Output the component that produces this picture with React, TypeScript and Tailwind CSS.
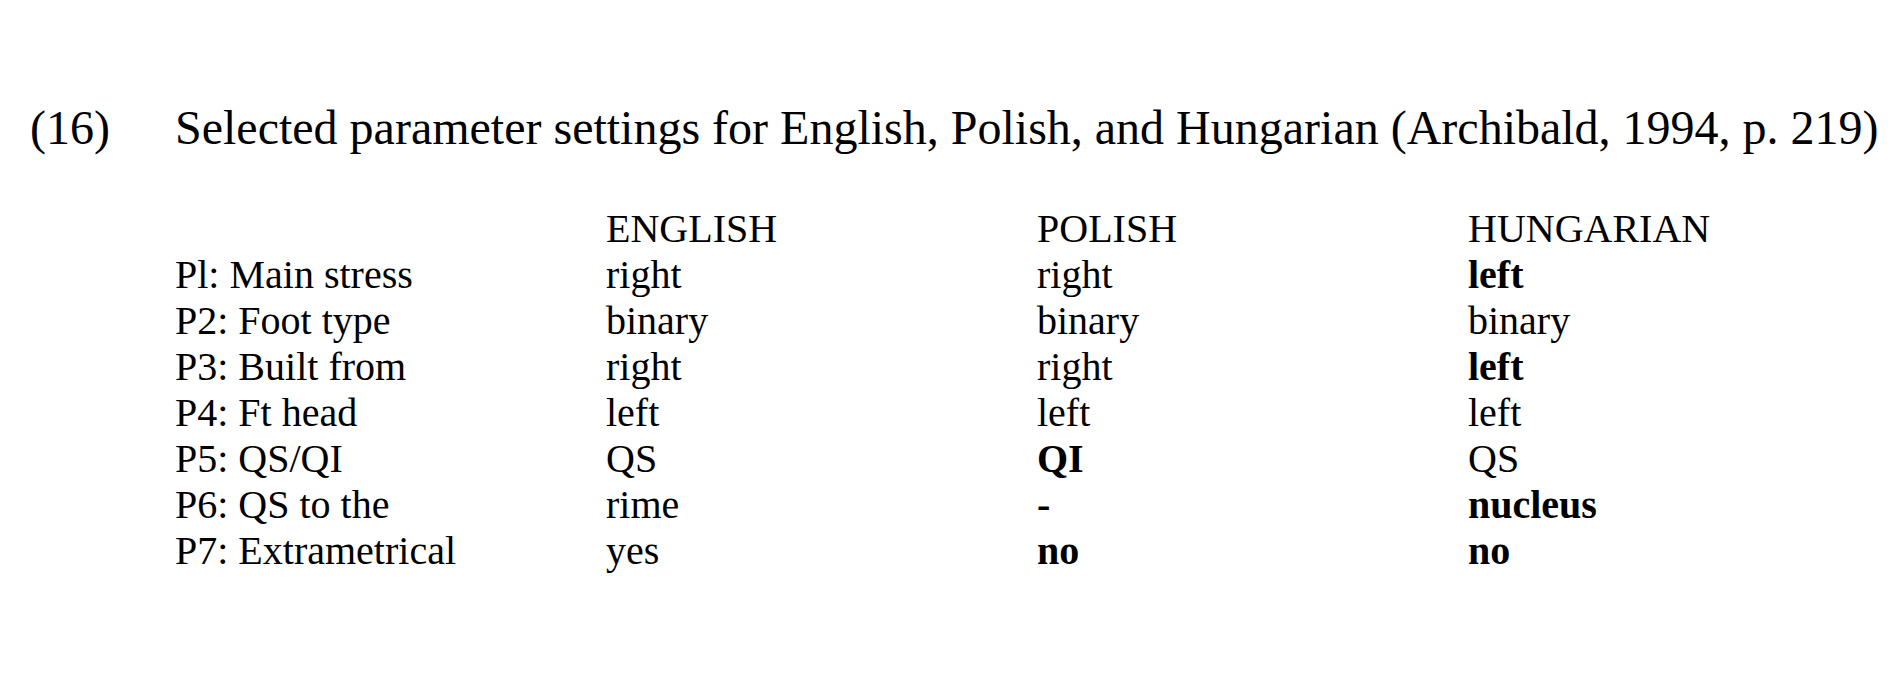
const rows: [string, string, string, string][] = [
  ["Pl: Main stress", "right", "right", "*left"],
  ["P2: Foot type", "binary", "binary", "binary"],
  ["P3: Built from", "right", "right", "*left"],
  ["P4: Ft head", "left", "left", "left"],
  ["P5: QS/QI", "QS", "*QI", "QS"],
  ["P6: QS to the", "rime", "*-", "*nucleus"],
  ["P7: Extrametrical", "yes", "*no", "*no"],
];

function Cell({ text }: { text: string }) {
  const bold = text.startsWith("*");
  return <div className={bold ? "font-bold" : ""}>{bold ? text.slice(1) : text}</div>;
}

export default function App() {
  return (
    <div className="w-[1892px] h-[673px] bg-white text-black font-['Liberation_Serif','Times_New_Roman',serif] overflow-hidden">
      <div className="pt-[101px] flex text-[48px] leading-[54px]">
        <div className="w-[175px] pl-[30px]">(16)</div>
        <div>Selected parameter settings for English, Polish, and Hungarian (Archibald, 1994, p. 219)</div>
      </div>
      <div className="mt-[51px] ml-[175px] grid grid-cols-[431px_431px_431px_auto] text-[40px] leading-[46px]">
        <div />
        <div>ENGLISH</div>
        <div>POLISH</div>
        <div>HUNGARIAN</div>
        {rows.map((r) => r.map((c, i) => <Cell key={r[0] + i} text={c} />))}
      </div>
    </div>
  );
}
